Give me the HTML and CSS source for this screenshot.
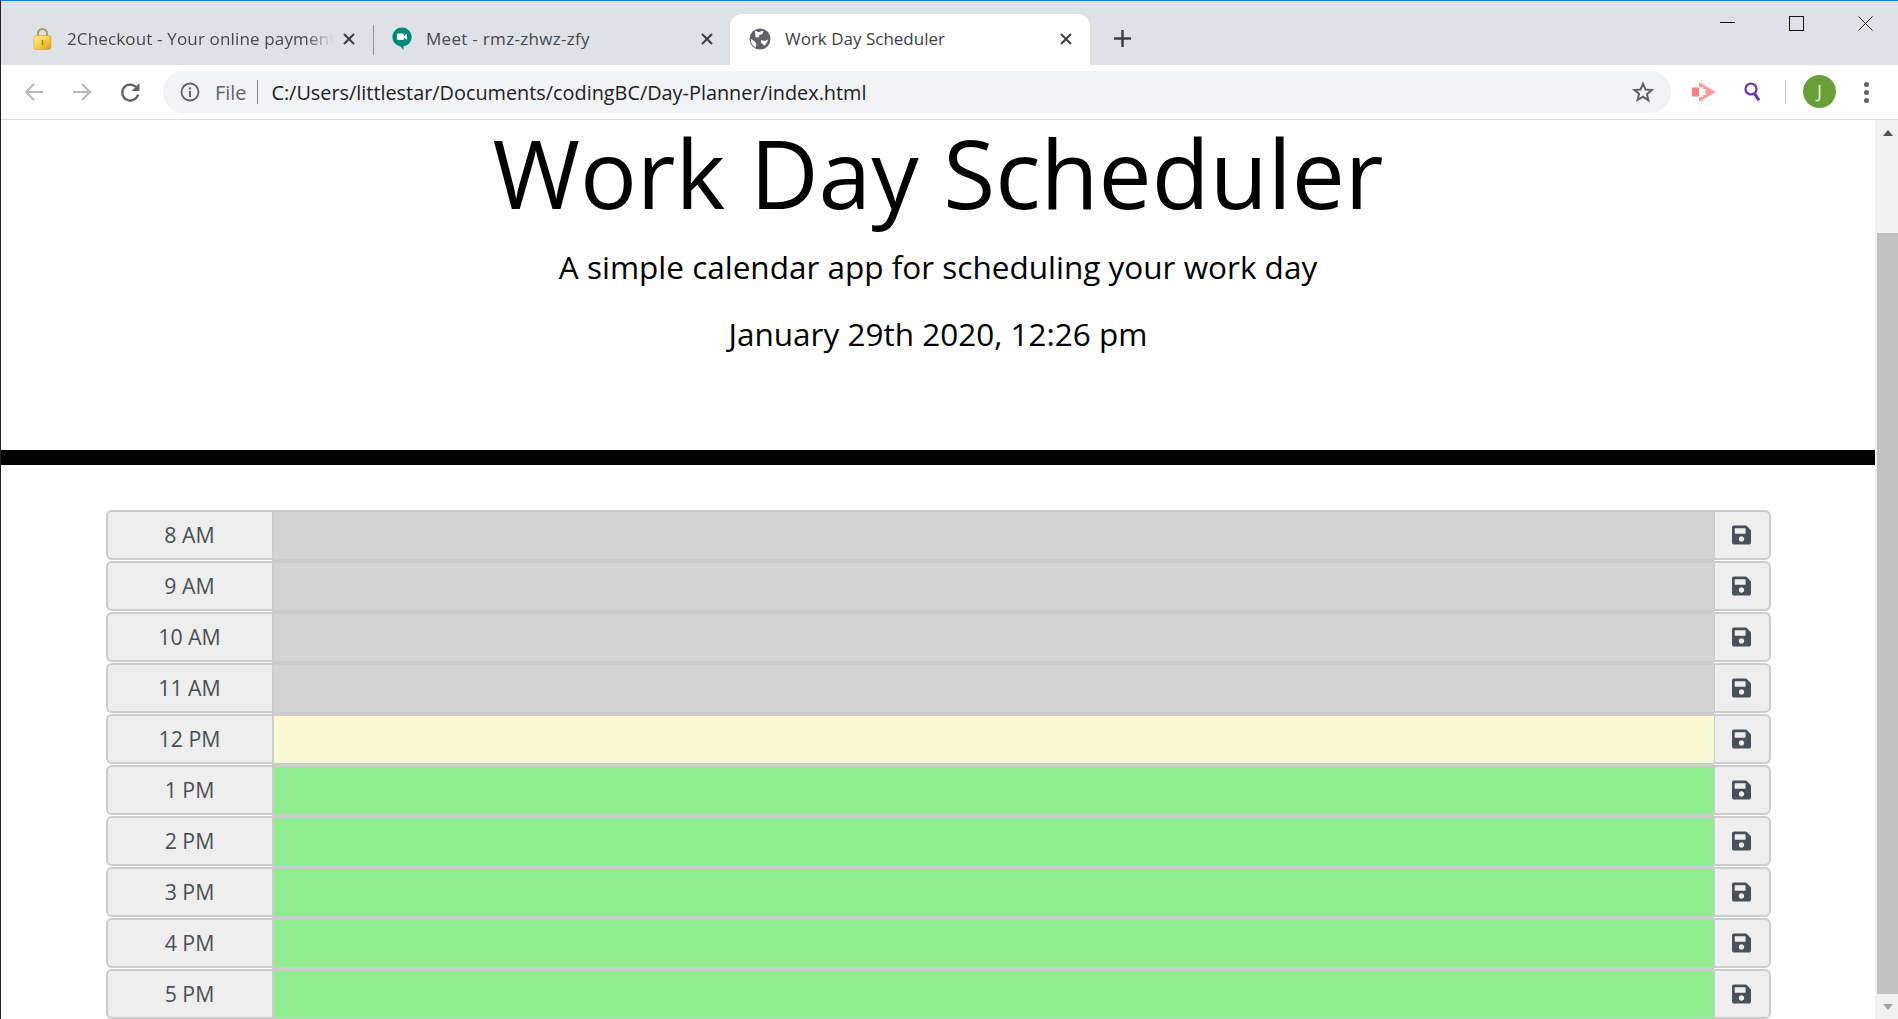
FILE: index.html
```html
<!DOCTYPE html>
<html lang="en">
<head>
  <meta charset="UTF-8" />
  <title>Work Day Scheduler</title>
  <link rel="stylesheet" href="styles.css">
</head>
<body>
  <svg class="sprites" width="0" height="0">
    <defs>
      <linearGradient id="gold" x1="0" y1="0" x2="1" y2="1">
        <stop offset="0" stop-color="#fff3a0"/>
        <stop offset=".5" stop-color="#f7cf45"/>
        <stop offset="1" stop-color="#d79a1e"/>
      </linearGradient>
    </defs>
    <symbol id="save" viewBox="0 0 448 512">
      <path fill="currentColor" d="M433.941 129.941l-83.882-83.882A48 48 0 0 0 316.118 32H48C21.49 32 0 53.49 0 80v352c0 26.51 21.49 48 48 48h352c26.51 0 48-21.49 48-48V163.882a48 48 0 0 0-14.059-33.941zM224 416c-35.346 0-64-28.654-64-64 0-35.346 28.654-64 64-64s64 28.654 64 64c0 35.346-28.654 64-64 64zm96-304.52V212c0 6.627-5.373 12-12 12H76c-6.627 0-12-5.373-12-12V108c0-6.627 5.373-12 12-12h228.52c3.183 0 6.235 1.264 8.485 3.515l3.48 3.48A11.996 11.996 0 0 1 320 111.48z"/>
    </symbol>
    <symbol id="tab-x" viewBox="0 0 12 12">
      <path d="M1 1l10 10M11 1L1 11" stroke="#3c4043" stroke-width="2" fill="none"/>
    </symbol>
  </svg>

  <div class="tabstrip">
    <div class="tab tab-first">
      <svg class="favicon" width="19" height="23" viewBox="0 0 19 23">
        <path d="M5 11V6.500a4.500 4.500 0 0 1 9 0V11" fill="none" stroke="#a9985c" stroke-width="2"/>
        <rect x="1" y="8.500" width="17" height="14" rx="2.500" fill="url(#gold)" stroke="#d9a92e" stroke-width=".8"/>
        <rect x="8.700" y="13" width="1.600" height="5" fill="#a57d22"/>
      </svg>
      <span class="tab-title fade">2Checkout - Your online payment</span>
      <svg class="tab-close" width="12" height="12"><use href="#tab-x"/></svg>
    </div>
    <div class="tab-sep"></div>
    <div class="tab tab-second">
      <svg class="favicon" width="20" height="23" viewBox="0 0 20 23">
        <path d="M10 .5a9.500 9.500 0 0 1 1.500 18.900V23l-3-3.600A9.500 9.500 0 0 1 10 .5z" fill="#00897b"/>
        <rect x="5" y="6.500" width="7" height="6.500" rx="1" fill="#fff"/>
        <path d="M12 9l3-2.500v6.500L12 10.500z" fill="#fff"/>
      </svg>
      <span class="tab-title">Meet - rmz-zhwz-zfy</span>
      <svg class="tab-close" width="12" height="12"><use href="#tab-x"/></svg>
    </div>
    <div class="tab tab-active">
      <svg class="favicon" width="22" height="22" viewBox="0 0 22 22">
        <circle cx="11" cy="11" r="10.500" fill="#5f6368"/>
        <path d="M6 2.500c2 1 3 2 4 1.500s3-1 4.500-1l-1 3-3 1-1 2.500-3-.5zM12 12l4 1 3-1.500c-.5 3-2 5-4 6.500l-1-2-2-1zM2 11l4 2.500 1.500 3-1 3C3.500 18 1.500 15 2 11z" fill="#fff"/>
      </svg>
      <span class="tab-title">Work Day Scheduler</span>
      <svg class="tab-close" width="12" height="12"><use href="#tab-x"/></svg>
    </div>
    <svg class="new-tab" width="19" height="19" viewBox="0 0 19 19">
      <path d="M9.500 1v17M1 9.500h17" stroke="#3c4043" stroke-width="2.500"/>
    </svg>
    <div class="window-btns">
      <svg width="15" height="15" viewBox="0 0 15 15"><path d="M0 6.500h15" stroke="#111" stroke-width="1"/></svg>
      <svg width="15" height="15" viewBox="0 0 15 15"><rect x=".5" y=".5" width="14" height="14" fill="none" stroke="#111"/></svg>
      <svg width="15" height="15" viewBox="0 0 15 15"><path d="M.5.500l14 14M14.500.500l-14 14" stroke="#222" stroke-width="1"/></svg>
    </div>
  </div>

  <div class="toolbar">
    <svg class="nav-btn" width="20" height="20" viewBox="0 0 20 20">
      <path d="M19 10H2M10 2l-8 8 8 8" fill="none" stroke="#b4b7bb" stroke-width="2"/>
    </svg>
    <svg class="nav-btn" width="20" height="20" viewBox="0 0 20 20">
      <path d="M1 10h17M10 2l8 8-8 8" fill="none" stroke="#b4b7bb" stroke-width="2"/>
    </svg>
    <svg class="nav-btn" width="21" height="21" viewBox="0 0 21 21">
      <path d="M18 12.500A8 8 0 1 1 16 5" fill="none" stroke="#5f6368" stroke-width="2.200"/>
      <path d="M19.500 1v8h-8z" fill="#5f6368"/>
    </svg>
    <div class="omnibox">
      <svg class="info" width="20" height="20" viewBox="0 0 20 20">
        <circle cx="10" cy="10" r="8.500" fill="none" stroke="#5f6368" stroke-width="1.800"/>
        <path d="M9 9h2v6H9zM9 5.500h2v2H9z" fill="#5f6368"/>
      </svg>
      <span class="scheme">File</span>
      <span class="omni-sep"></span>
      <span class="url">C:/Users/littlestar/Documents/codingBC/Day-Planner/index.html</span>
      <svg class="star" width="22" height="22" viewBox="0 0 24 24">
        <path d="M12 3l2.700 6.300 6.800.6-5.200 4.500 1.600 6.700L12 17l-5.900 3.600 1.600-6.700L2.500 9.900l6.800-.6z" fill="none" stroke="#5f6368" stroke-width="2.200"/>
      </svg>
    </div>
    <svg class="ext-pink" width="24" height="20" viewBox="0 0 24 20">
      <path d="M0 5.500h7v9H0z" fill="#ff7f85"/>
      <path d="M7 0l9 5.500 8 4.500-8 4.500L7 20v-5h4v-2h3l-1-3 1-3h-3V5H7z" fill="#ff9a9e"/>
    </svg>
    <svg class="ext-lens" width="16" height="20" viewBox="0 0 16 20">
      <circle cx="7" cy="7" r="5.500" fill="none" stroke="#6f2da8" stroke-width="2.200"/>
      <path d="M10.500 11.500l4.500 7" stroke="#6f2da8" stroke-width="3"/>
    </svg>
    <span class="tool-sep"></span>
    <span class="avatar">J</span>
    <span class="dots"><i></i><i></i><i></i></span>
  </div>

  <div class="viewport">
    <main class="page">
      <header class="jumbotron">
        <h1>Work Day Scheduler</h1>
        <p class="lead">A simple calendar app for scheduling your work day</p>
        <p class="today">January 29th 2020, 12:26 pm</p>
      </header>

      <div class="planner">
        <div class="row">
          <div class="hour">8 AM</div>
          <textarea class="task past"></textarea>
          <button class="save"><svg width="19" height="22"><use href="#save"/></svg></button>
        </div>
        <div class="row">
          <div class="hour">9 AM</div>
          <textarea class="task past"></textarea>
          <button class="save"><svg width="19" height="22"><use href="#save"/></svg></button>
        </div>
        <div class="row">
          <div class="hour">10 AM</div>
          <textarea class="task past"></textarea>
          <button class="save"><svg width="19" height="22"><use href="#save"/></svg></button>
        </div>
        <div class="row">
          <div class="hour">11 AM</div>
          <textarea class="task past"></textarea>
          <button class="save"><svg width="19" height="22"><use href="#save"/></svg></button>
        </div>
        <div class="row">
          <div class="hour">12 PM</div>
          <textarea class="task present"></textarea>
          <button class="save"><svg width="19" height="22"><use href="#save"/></svg></button>
        </div>
        <div class="row">
          <div class="hour">1 PM</div>
          <textarea class="task future"></textarea>
          <button class="save"><svg width="19" height="22"><use href="#save"/></svg></button>
        </div>
        <div class="row">
          <div class="hour">2 PM</div>
          <textarea class="task future"></textarea>
          <button class="save"><svg width="19" height="22"><use href="#save"/></svg></button>
        </div>
        <div class="row">
          <div class="hour">3 PM</div>
          <textarea class="task future"></textarea>
          <button class="save"><svg width="19" height="22"><use href="#save"/></svg></button>
        </div>
        <div class="row">
          <div class="hour">4 PM</div>
          <textarea class="task future"></textarea>
          <button class="save"><svg width="19" height="22"><use href="#save"/></svg></button>
        </div>
        <div class="row">
          <div class="hour">5 PM</div>
          <textarea class="task future"></textarea>
          <button class="save"><svg width="19" height="22"><use href="#save"/></svg></button>
        </div>
      </div>
    </main>

    <div class="scrollbar">
      <span class="arrow-up"></span>
      <span class="thumb"></span>
      <span class="arrow-down"></span>
    </div>
  </div>
</body>
</html>
```

FILE: styles.css
```css
html, body {
  margin: 0;
  padding: 0;
  height: 100%;
  overflow: hidden;
  background: #fff;
  color: #000;
  font-family: "Open Sans", sans-serif;
}

body {
  display: flex;
  flex-direction: column;
  border-left: 1px solid #222;
  box-sizing: border-box;
}

.sprites {
  position: absolute;
}

/* browser tabs */
.tabstrip {
  display: flex;
  align-items: flex-end;
  flex: none;
  height: 65px;
  box-sizing: border-box;
  border-top: 1px solid #0a84d8;
  margin-left: -1px;
  background: #dee1e6;
  color: #45494e;
  font-size: 17px;
}

.tab {
  display: flex;
  align-items: center;
  height: 51px;
  box-sizing: border-box;
  flex: none;
  padding-bottom: 2px;
}

.tab-first {
  width: 373px;
  padding-left: 33px;
  padding-right: 18px;
  letter-spacing: .15px;
}

.tab-sep {
  width: 1px;
  height: 30px;
  margin-bottom: 10px;
  background: #8f9296;
}

.tab-second {
  width: 356px;
  padding-left: 18px;
  padding-right: 17px;
  letter-spacing: .3px;
}

.tab-second .favicon {
  margin-right: 14px;
}

.tab-active {
  width: 360px;
  padding-left: 19px;
  padding-right: 18px;
  background: #fff;
  border-radius: 12px 12px 0 0;
  color: #3c4043;
}

.tab-active .favicon {
  margin-right: 14px;
}

.favicon {
  flex: none;
  margin-right: 15px;
}

.tab-title {
  flex: 1;
  white-space: nowrap;
  overflow: hidden;
}

.fade {
  -webkit-mask-image: linear-gradient(90deg, #000 90%, transparent);
  mask-image: linear-gradient(90deg, #000 90%, transparent);
}

.tab-close {
  flex: none;
  margin-left: 10px;
}

.new-tab {
  margin: 0 0 17px 23px;
  flex: none;
}

.window-btns {
  display: flex;
  gap: 54px;
  margin: 0 25px 34px auto;
}

/* address bar row */
.toolbar {
  display: flex;
  align-items: center;
  flex: none;
  height: 55px;
  box-sizing: border-box;
  border-bottom: 1px solid #dcdcdc;
  padding: 0 0 0 23px;
}

.nav-btn {
  flex: none;
  margin-right: 28px;
}

.nav-btn:nth-child(3) {
  margin-right: 22px;
}

.omnibox {
  display: flex;
  align-items: center;
  width: 1508px;
  height: 42px;
  box-sizing: border-box;
  padding: 0 17px 0 17px;
  border-radius: 21px;
  background: #f1f3f4;
  font-size: 19.85px;
}

.info {
  flex: none;
}

.scheme {
  margin-left: 15px;
  color: #5f6368;
}

.omni-sep {
  width: 1px;
  height: 24px;
  margin: 0 13px 0 11px;
  background: #7d8084;
}

.url {
  flex: 1;
  color: #202124;
  white-space: nowrap;
}

.ext-pink {
  flex: none;
  margin-left: 21px;
}

.ext-lens {
  flex: none;
  margin-left: 28px;
}

.tool-sep {
  width: 1px;
  height: 24px;
  margin: 0 17px 0 25px;
  background: #ccc;
}

.avatar {
  width: 33px;
  height: 33px;
  margin-bottom: 1px;
  border-radius: 50%;
  background: #689f38;
  color: #e8f0dc;
  font-size: 18px;
  text-align: center;
  line-height: 33px;
}

.dots {
  display: flex;
  flex-direction: column;
  gap: 3px;
  margin-left: 28px;
}

.dots i {
  display: block;
  width: 5px;
  height: 5px;
  border-radius: 50%;
  background: #5f6368;
}

/* the page itself */
.viewport {
  display: flex;
  flex: 1;
  min-height: 0;
}

.page {
  flex: 1;
  min-width: 0;
}

.jumbotron {
  display: flow-root;
  height: 330px;
  border-bottom: 15px solid #000;
  text-align: center;
}

h1 {
  margin: -12px 0 0;
  font-size: 94.7px;
  font-weight: 400;
  line-height: 129px;
}

.lead {
  margin: 8px 0 0;
  font-size: 31.5px;
  line-height: 44px;
}

.today {
  margin: 23px 0 0;
  font-size: 31.5px;
  line-height: 44px;
}

.planner {
  width: 1665px;
  margin: 45px auto 0;
}

.row {
  display: flex;
  height: 51px;
}

.hour {
  flex: none;
  width: 166px;
  height: 50px;
  box-sizing: border-box;
  border: 2px solid #ccc;
  border-right: 0;
  border-radius: 6px 0 0 6px;
  background: #eee;
  color: #495057;
  font-size: 21.3px;
  line-height: 46px;
  text-align: center;
}

.task {
  flex: 1;
  height: 51px;
  box-sizing: border-box;
  margin: 0;
  padding: 0;
  border: 2px solid #ccc;
  border-width: 2px 0 2px 2px;
  border-radius: 0;
  outline: 0;
  resize: none;
}

.past {
  background: #d3d3d3;
}

.present {
  background: #f9f9d2;
}

.future {
  background: #90ee90;
}

.save {
  flex: none;
  width: 57px;
  height: 50px;
  box-sizing: border-box;
  padding: 0;
  border: 2px solid #ccc;
  border-left: 1px solid #ccc;
  border-radius: 0 6px 6px 0;
  background: #eee;
  color: #495057;
}

.save svg {
  display: block;
  margin: 0 auto;
}

/* scrollbar */
.scrollbar {
  display: flex;
  flex: none;
  flex-direction: column;
  align-items: center;
  width: 23px;
  box-sizing: border-box;
  padding-left: 2px;
  background: #f1f1f1;
}

.arrow-up {
  margin-top: 10px;
  border: 5.5px solid transparent;
  border-top: 0;
  border-bottom: 6px solid #505050;
}

.thumb {
  width: 21px;
  height: 761px;
  margin-top: 97px;
  background: #c1c1c1;
}

.arrow-down {
  margin-top: 10px;
  border: 5.5px solid transparent;
  border-bottom: 0;
  border-top: 6px solid #a3a3a3;
}
```
